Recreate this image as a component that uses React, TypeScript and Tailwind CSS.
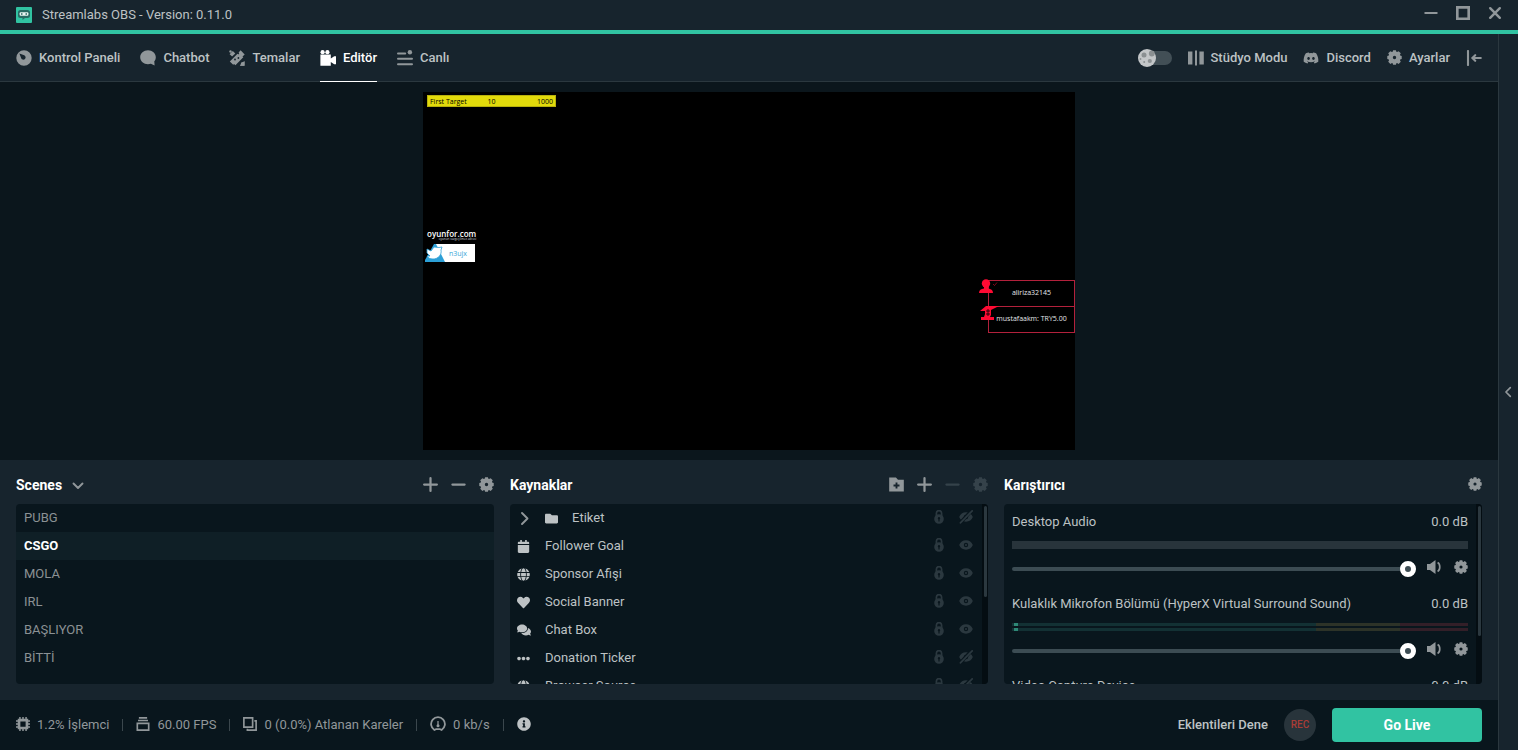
// src/App.tsx
// Streaming editor: title bar, nav, canvas preview, scenes / sources / mixer, status footer.

import { useState } from 'react'
import type { ReactNode } from 'react'
import { FaCalendar, FaComments, FaDiscord, FaEllipsisH, FaFolder, FaGlobe, FaHeart, FaInfoCircle } from 'react-icons/fa'

/* ---------- Icons ---------- */

type IconProps = { className?: string }

function Svg({ className = 'size-4', children }: IconProps & { children: ReactNode }) {
  return (
    <svg viewBox="0 0 16 16" fill="currentColor" className={`shrink-0 ${className}`} aria-hidden="true">
      {children}
    </svg>
  )
}

const GearIcon = ({ className }: IconProps) => (
  <Svg className={className}>
    <path
      fillRule="evenodd"
      d="M6.500.300h3l.5 1.600.7.3 1.700-1 2.300 2.300-.9 1.600.3.700 1.600.500v3.400l-1.600.500-.3.700.9 1.600-2.300 2.300-1.700-1-.7.300-.5 1.600h-3L6 14.100l-.7-.3-1.700 1-2.300-2.300.9-1.600-.3-.7L.300 9.700V6.300l1.600-.500.3-.7-.9-1.600L3.600 1.200l1.700 1L6 1.900zM8 6.200a1.800 1.800 0 1 0 0 3.600 1.800 1.800 0 0 0 0-3.600z"
    />
  </Svg>
)

const PlusIcon = ({ className }: IconProps) => (
  <Svg className={className}>
    <path d="M8 1.200v13.600M1.200 8h13.600" stroke="currentColor" strokeWidth="2.400" strokeLinecap="round" />
  </Svg>
)

const MinusIcon = ({ className }: IconProps) => (
  <Svg className={className}>
    <path d="M1.500 8h13" stroke="currentColor" strokeWidth="2.400" strokeLinecap="round" />
  </Svg>
)

const FolderPlusIcon = ({ className }: IconProps) => (
  <Svg className={className}>
    <path fillRule="evenodd" d="M.2.6h7.200l2.200 2.400h6.200v12.400H.2zM7 5.800v2.200H4.800v2H7v2.200h2V10h2.200V8H9V5.800z" />
  </Svg>
)

const DashboardIcon = () => (
  <Svg>
    <path fillRule="evenodd" d="M8 .3a7.700 7.700 0 1 0 0 15.400A7.700 7.700 0 0 0 8 .3zM3.400 3.600l4.800 1.600a2.300 2.300 0 1 1-3 3z" />
  </Svg>
)

const ChatbotIcon = () => (
  <Svg>
    <path d="M8 .3C3.700.3.200 3.300.2 7.200s3.500 7 7.800 7c1 0 2-.2 2.900-.5l3.700 1.700-.3-4.100c1-1.100 1.500-2.600 1.500-4.100C15.800 3.300 12.300.3 8 .3z" />
  </Svg>
)

const ThemesIcon = () => (
  <Svg>
    <path d="M11.600.300 15.700 4.400 13.500 6.500 14.300 7.300 6.400 15.200 5.100 13.900 4.200 14.800.800 11.400 8.500 3.700 9.300 4.500 10.200 3.600 9.600 2.600z" />
    <path d="M.6 4.300 3.800 1.100 6.300 3.600 3.100 6.600z" />
    <path d="M15.500 11v4.700h-4.700z" />
    <path d="M15.500 11.500v4.200h-4.300l1-3.200z" />
    <circle cx="1.500" cy="1.500" r="1.200" />
    <g fill="#17242d">
      <circle cx="6" cy="9.500" r=".9" />
      <circle cx="9.400" cy="8" r=".9" />
    </g>
  </Svg>
)

const CameraIcon = () => (
  <Svg>
    <circle cx="2.600" cy="2.200" r="2.100" />
    <circle cx="7.400" cy="2.200" r="2.100" />
    <path d="M.4 4.600h10.400v3.900l3.400-2.200H16v8h-1.800l-3.400-2.200v3.600H.4z" />
  </Svg>
)

const LiveIcon = () => (
  <Svg>
    <path d="M1 3.500h7.200M1 8.800h14M1 14.200h14" stroke="currentColor" strokeWidth="2" strokeLinecap="round" />
    <circle cx="12.900" cy="2.300" r="2.200" />
  </Svg>
)

const StudioIcon = () => (
  <Svg>
    <path d="M0 1.500h4.400v13H0zM7 .5h2v15H7zM11.400 1.500h4.400v13h-4.400z" />
  </Svg>
)

const CollapseIcon = () => (
  <Svg>
    <path d="M2 1v14M14.800 8H6.800M9.200 5.200 6.400 8l2.800 2.800" fill="none" stroke="currentColor" strokeWidth="2.100" strokeLinecap="round" />
  </Svg>
)

const LockIcon = () => (
  <svg viewBox="0 0 10 14" className="h-3.5 w-2.5" fill="currentColor" aria-hidden="true">
    <path d="M2.400 6V3.200a2.600 2.600 0 0 1 5.200 0V6" fill="none" stroke="currentColor" strokeWidth="1.700" />
    <path fillRule="evenodd" d="M5 4.200a4.800 4.800 0 1 0 0 9.600 4.800 4.800 0 0 0 0-9.600zM5 7a1.300 1.300 0 0 0-.6 2.400v2h1.200v-2A1.300 1.300 0 0 0 5 7z" />
  </svg>
)

const EyeIcon = ({ hidden }: { hidden?: boolean }) => (
  <svg viewBox="0 0 14 14" className="size-3.5" fill="currentColor" aria-hidden="true">
    <path
      fillRule="evenodd"
      d="M7 2.300C3.800 2.300 1.300 4.100.2 7c1.100 2.900 3.600 4.700 6.800 4.700s5.700-1.800 6.800-4.700C12.700 4.100 10.200 2.300 7 2.300zM7 4.800a2.200 2.200 0 1 1 0 4.400 2.200 2.200 0 0 1 0-4.400z"
    />
    <circle cx="7" cy="7" r="1" />
    {hidden && (
      <>
        <path d="M1.200 13 12 1.200" stroke="#09161d" strokeWidth="3.400" />
        <path d="M1.400 12.800 13.200.8" stroke="currentColor" strokeWidth="1.700" strokeLinecap="round" />
      </>
    )}
  </svg>
)

const SpeakerIcon = () => (
  <Svg>
    <path d="M1 4.900h3L9.500 1v14L4 11.100H1z" />
    <path d="M11.600 3.600c2.900 1.500 2.900 7.300 0 8.800" fill="none" stroke="currentColor" strokeWidth="1.700" />
  </Svg>
)

const CpuIcon = () => (
  <Svg className="size-3.5">
    <path fillRule="evenodd" d="M2 2h12v12H2zM5 5v6h6V5z" />
    <path d="M4.500 0v3M8 0v3M11.500 0v3M4.500 13v3M8 13v3M11.500 13v3M0 4.500h3M0 8h3M0 11.500h3M13 4.500h3M13 8h3M13 11.500h3" stroke="currentColor" strokeWidth="1.700" />
  </Svg>
)

const FpsIcon = () => (
  <Svg className="size-3.5">
    <path d="M3.300 1h9.400M2.300 4h11.400" stroke="currentColor" strokeWidth="1.800" />
    <path d="M1.500 7.200h13v7.800h-13z" fill="none" stroke="currentColor" strokeWidth="1.900" />
  </Svg>
)

const FramesIcon = () => (
  <Svg className="size-3.5">
    <path d="M1 1h10v10.500H1zM13 4.500h2V15H5v-1.500" fill="none" stroke="currentColor" strokeWidth="1.900" />
  </Svg>
)

const SpeedIcon = () => (
  <Svg>
    <path d="M4.400 14a6.900 6.900 0 1 1 7.200 0l-1.500-.8H5.900z" fill="none" stroke="currentColor" strokeWidth="1.800" strokeLinejoin="round" />
    <path d="M8 5v5" stroke="currentColor" strokeWidth="1.300" />
    <circle cx="8" cy="9.700" r="1.500" />
  </Svg>
)

const ChevronIcon = ({ d, className }: IconProps & { d: string }) => (
  <Svg className={className}>
    <path d={d} fill="none" stroke="currentColor" strokeWidth="1.900" strokeLinecap="round" strokeLinejoin="round" />
  </Svg>
)

const LogoIcon = () => (
  <Svg>
    <rect width="16" height="16" rx="1" fill="#31c3a2" />
    <path d="M4.500 3h7a2.500 2.500 0 0 1 2.500 2.500v3A2.500 2.500 0 0 1 11.500 11H9l-2.500 2V11h-2A2.500 2.500 0 0 1 2 8.500v-3A2.500 2.500 0 0 1 4.500 3z" fill="#276a63" />
    <rect x="3.600" y="5.200" width="8.800" height="3.600" rx="1" fill="#e8f3f1" />
    <path d="M5 6.200h1.500v1.600H5zM9.500 6.200H11v1.600H9.500z" fill="#276a63" />
  </Svg>
)

/* ---------- Data ---------- */

const NAV = [
  { label: 'Kontrol Paneli', icon: <DashboardIcon /> },
  { label: 'Chatbot', icon: <ChatbotIcon /> },
  { label: 'Temalar', icon: <ThemesIcon /> },
  { label: 'Editör', icon: <CameraIcon /> },
  { label: 'Canlı', icon: <LiveIcon /> },
]

const SCENES = ['PUBG', 'CSGO', 'MOLA', 'IRL', 'BAŞLIYOR', 'BİTTİ']

const SOURCES = [
  { label: 'Follower Goal', icon: <FaCalendar size={13} /> },
  { label: 'Sponsor Afişi', icon: <FaGlobe size={13} /> },
  { label: 'Social Banner', icon: <FaHeart size={13} /> },
  { label: 'Chat Box', icon: <FaComments size={14} /> },
  { label: 'Donation Ticker', icon: <FaEllipsisH size={13} />, hidden: true },
  { label: 'Browser Source', icon: <FaGlobe size={13} />, hidden: true },
]

const CHANNELS = [
  { label: 'Desktop Audio', active: false },
  { label: 'Kulaklık Mikrofon Bölümü (HyperX Virtual Surround Sound)', active: true },
  { label: 'Video Capture Device', active: false },
]

/* ---------- Parts ---------- */

function TitleBar() {
  return (
    <div className="flex h-[34px] shrink-0 items-center justify-between border-b-4 border-[#31c3a2] px-4">
      <div className="flex items-center gap-2.5 text-[13px]">
        <LogoIcon />
        <span>Streamlabs OBS - Version: 0.11.0</span>
      </div>
      <div className="flex items-center gap-[18px] pb-1 text-[#91979a]">
        <button aria-label="Minimize"><MinusIcon className="size-3.5" /></button>
        <button aria-label="Maximize">
          <Svg className="size-3.5"><path d="M1.500 1.500h13v13h-13z" fill="none" stroke="currentColor" strokeWidth="3" /></Svg>
        </button>
        <button aria-label="Close">
          <Svg className="size-3.5"><path d="M2.500 2.500l11 11M13.500 2.500l-11 11" stroke="currentColor" strokeWidth="2.800" strokeLinecap="round" /></Svg>
        </button>
      </div>
    </div>
  )
}

function TopNav() {
  return (
    <header className="flex h-12 shrink-0 items-stretch justify-between border-b border-[#2b383f] px-4 font-medium">
      <nav className="flex gap-5">
        {NAV.map(({ label, icon }) => (
          <a
            key={label}
            href="#"
            className={
              label === 'Editör'
                ? '-mb-px flex items-center gap-[7px] border-b border-white text-white'
                : '-mb-px flex items-center gap-[7px] border-b border-transparent'
            }
          >
            <span className={label === 'Editör' ? 'text-white' : 'text-[#91979a]'}>{icon}</span>
            {label}
          </a>
        ))}
      </nav>
      <div className="flex items-center gap-4">
        <button aria-label="Night mode" className="flex w-[34px] items-center">
          <svg viewBox="0 0 34 18" className="h-[18px] w-full" aria-hidden="true">
            <rect x="4" y="2" width="30" height="14" rx="7" fill="#424f56" />
            <circle cx="9" cy="9" r="9" fill="#c3c6c8" />
            <g fill="#8b9092">
              <circle cx="6" cy="6" r="2.500" />
              <circle cx="13.800" cy="4.500" r="2.900" />
              <circle cx="11.800" cy="12" r="2.100" />
              <circle cx="6.200" cy="13" r="1" />
            </g>
            <circle cx="2.500" cy="10" r="0.900" fill="#8b9092" />
          </svg>
        </button>
        <a href="#" className="flex items-center gap-[7px]">
          <span className="text-[#91979a]"><StudioIcon /></span>
          Stüdyo Modu
        </a>
        <a href="#" className="flex items-center gap-[7px]">
          <FaDiscord size={16} className="text-[#91979a]" />
          Discord
        </a>
        <a href="#" className="flex items-center gap-[7px]">
          <GearIcon className="size-[15px] text-[#91979a]" />
          Ayarlar
        </a>
        <button aria-label="Collapse" className="text-[#91979a]"><CollapseIcon /></button>
      </div>
    </header>
  )
}

// Output canvas; overlays sit freely on it
function Preview() {
  return (
    <section className="flex min-h-0 flex-1 justify-center bg-[#0b161c] py-2.5">
      <div className="relative aspect-[652/358] h-full overflow-hidden bg-black font-['Open_Sans',sans-serif] text-[7px] leading-none">
        <div className="absolute top-[3px] left-1 grid h-3 w-[129px] grid-cols-3 items-center border border-[#b8b10c] bg-[#e2da0b] px-0.5 font-medium text-black">
          <span className="whitespace-nowrap">First Target</span>
          <span className="text-center">10</span>
          <span className="text-right">1000</span>
        </div>

        <div className="absolute top-[138px] left-1 text-[8px] font-semibold text-white">
          oyunfor.com
          <div className="text-right text-[3px] font-normal text-gray-300">oyunun vazgeçilmez adresi</div>
        </div>

        <div className="absolute top-[152px] left-0.5 flex h-[18px] w-[50px] items-center justify-end bg-white pr-2 text-[#3aa7d8]">
          <svg viewBox="0 0 20 18" className="absolute left-0 h-[18px] w-5" aria-hidden="true">
            <path d="M0 0h11L20 18H0z" fill="#2c9fd6" />
            <path d="M0 0h9L0 16z" fill="#000" />
            <path d="M2 5l4 2 3-4 5 .5 3-.5-1 3c1 5-3 9-8 9-3 0-5-1-6-3h3L2 9z" fill="#fff" stroke="#2c9fd6" strokeWidth=".8" />
          </svg>
          n3ujx
        </div>

        <div className="absolute top-[188px] right-0 w-[87px] border border-[#b3213c] text-center text-gray-200">
          <div className="flex h-[26px] items-center justify-center border-b border-[#b3213c] pb-0.5">aliriza32145</div>
          <div className="flex h-[25px] items-center justify-center pb-0.5 whitespace-nowrap">mustafaakm: TRY5.00</div>
          <svg viewBox="0 0 20 44" className="absolute -top-0.5 -left-2.5 h-11 w-5 text-[#ff0a33]" fill="currentColor" aria-hidden="true">
            <circle cx="7" cy="4.500" r="4.200" />
            <path d="M5 8h4v1.500c3 .3 5 1.500 5 4.500H0c0-3 2-4.200 5-4.500z" />
            <path d="M14 5l1.500 1.500 2.500-3" fill="none" stroke="currentColor" strokeWidth=".5" />
            <path d="M1 32l6-5h13l-6 3-2 1v5l-1 2h4v3H2v-3h3l1-3v-3z" />
            <path d="M7 32h4M7 35h4M9 30v7" stroke="#000" strokeWidth=".8" />
          </svg>
        </div>
      </div>
    </section>
  )
}

function PanelHeader({ title, children }: { title: ReactNode; children: ReactNode }) {
  return (
    <div className="flex h-11 items-center justify-between pt-1.5">
      <h2 className="flex items-center gap-2 text-sm font-bold text-white">{title}</h2>
      <div className="flex items-center gap-[13px] pb-0.5 text-[#91979a]">{children}</div>
    </div>
  )
}

function Scenes() {
  const [active, setActive] = useState('CSGO')

  return (
    <section>
      <PanelHeader
        title={
          <>
            Scenes
            <button aria-label="Scene collections" className="text-[#91979a]">
              <ChevronIcon className="size-4" d="M3.500 6.500l4.500 4.500 4.500-4.500" />
            </button>
          </>
        }
      >
        <button aria-label="Add scene"><PlusIcon className="size-[15px]" /></button>
        <button aria-label="Remove scene"><MinusIcon className="size-[15px]" /></button>
        <button aria-label="Scene settings"><GearIcon className="size-[15px]" /></button>
      </PanelHeader>
      <ul className="h-[180px] overflow-hidden rounded bg-[#09161d]">
        {SCENES.map((scene) => (
          <li key={scene}>
            <button
              onClick={() => setActive(scene)}
              className={
                scene === active
                  ? 'h-7 w-full bg-[#0f1f26] px-2 text-left font-bold text-white'
                  : 'h-7 w-full px-2 text-left text-[#8b9194]'
              }
            >
              {scene}
            </button>
          </li>
        ))}
      </ul>
    </section>
  )
}

function RowActions({ hidden }: { hidden?: boolean }) {
  return (
    <span className="ml-auto flex items-center gap-[15px] pb-0.5 text-[#2b383f]">
      <button aria-label="Lock"><LockIcon /></button>
      <button aria-label="Visibility"><EyeIcon hidden={hidden} /></button>
    </span>
  )
}

function Sources() {
  return (
    <section>
      <PanelHeader title="Kaynaklar">
        <button aria-label="Add folder"><FolderPlusIcon className="size-[15px]" /></button>
        <button aria-label="Add source"><PlusIcon className="size-[15px]" /></button>
        <button aria-label="Remove source" disabled className="text-[#35424a]"><MinusIcon className="size-[15px]" /></button>
        <button aria-label="Source settings" disabled className="text-[#35424a]"><GearIcon className="size-[15px]" /></button>
      </PanelHeader>
      <div className="flex h-[180px] overflow-hidden rounded bg-[#09161d]">
        <ul className="min-w-0 flex-1">
          <li className="flex h-7 items-center pr-[9px] pl-[7px]">
            <button aria-label="Expand folder" className="w-7 text-[#91979a]">
              <ChevronIcon className="size-4" d="M5 3l5.500 5.500L5 14" />
            </button>
            <FaFolder size={13} className="mr-3.5" />
            Etiket
            <RowActions hidden />
          </li>
          {SOURCES.map(({ label, icon, hidden }) => (
            <li key={label} className="flex h-7 items-center pr-[9px] pl-[7px]">
              <span className="w-7">{icon}</span>
              {label}
              <RowActions hidden={hidden} />
            </li>
          ))}
        </ul>
        <div className="w-1.5 bg-[#040d12] pt-0.5">
          <div className="mx-auto h-[91px] w-[3px] rounded-full bg-[#2b383f]" />
        </div>
      </div>
    </section>
  )
}

function MeterBar() {
  return (
    <div className="relative flex h-[3px]">
      <div className="w-2/3 bg-[#133134]" />
      <div className="w-[18.4%] bg-[#2d3328]" />
      <div className="flex-1 bg-[#331f28]" />
      <div className="absolute inset-y-0 left-0.5 w-1 bg-[#2e8876]" />
    </div>
  )
}

function Mixer() {
  return (
    <section>
      <PanelHeader title="Karıştırıcı">
        <button aria-label="Mixer settings"><GearIcon className="size-3.5" /></button>
      </PanelHeader>
      <div className="flex h-[180px] overflow-hidden rounded bg-[#09161d]">
        <div className="min-w-0 flex-1 pr-2 pl-2">
          {CHANNELS.map(({ label, active }, i) => (
            <div key={label} className="h-[82px] pt-2">
              <div className="flex h-5 items-center justify-between">
                <label htmlFor={`volume-${i}`}>{label}</label>
                <span>0.0 dB</span>
              </div>
              <div className="mt-[9px] h-2">
                {active ? (
                  <div className="flex flex-col gap-0.5">
                    <MeterBar />
                    <MeterBar />
                  </div>
                ) : (
                  <div className="h-full bg-[#28343b]" />
                )}
              </div>
              <div className="mt-3 flex h-4 items-center text-[#91979a]">
                <input
                  id={`volume-${i}`}
                  type="range"
                  defaultValue={100}
                  className="h-1 min-w-0 flex-1 appearance-none rounded-full bg-[#3c4c53] [&::-webkit-slider-thumb]:size-4 [&::-webkit-slider-thumb]:appearance-none [&::-webkit-slider-thumb]:rounded-full [&::-webkit-slider-thumb]:border-[5px] [&::-webkit-slider-thumb]:border-white [&::-webkit-slider-thumb]:bg-[#3c4c53]"
                />
                <button aria-label="Mute" className="ml-2.5 pb-1"><SpeakerIcon /></button>
                <button aria-label="Channel settings" className="ml-3 pb-1"><GearIcon className="size-3.5" /></button>
              </div>
            </div>
          ))}
        </div>
        <div className="w-1.5 bg-[#040d12] pt-0.5">
          <div className="mx-auto h-[130px] w-[3px] rounded-full bg-[#2b383f]" />
        </div>
      </div>
    </section>
  )
}

const Divider = () => <span className="h-3 w-px bg-[#3b474d]" />

function Footer() {
  return (
    <footer className="flex h-[50px] shrink-0 items-center justify-between bg-[#09161d] px-4">
      <div className="flex items-center gap-[13px] text-[#91979a] [&_svg]:mb-0.5">
        <span className="flex items-center gap-[7px]"><CpuIcon />1.2% İşlemci</span>
        <Divider />
        <span className="flex items-center gap-[7px]"><FpsIcon />60.00 FPS</span>
        <Divider />
        <span className="flex items-center gap-[7px]"><FramesIcon />0 (0.0%) Atlanan Kareler</span>
        <Divider />
        <span className="flex items-center gap-[7px]"><SpeedIcon />0 kb/s</span>
        <Divider />
        <button aria-label="Info" className="text-[#bdc2c4]"><FaInfoCircle size={14} /></button>
      </div>
      <div className="flex items-center gap-4">
        <a href="#" className="font-medium">Eklentileri Dene</a>
        <button className="size-8 rounded-full bg-[#28343b] text-[10px] font-medium text-[#a83c36]">REC</button>
        <button className="h-[34px] w-[150px] rounded bg-[#31c3a2] text-sm font-bold text-white">Go Live</button>
      </div>
    </footer>
  )
}

export default function App() {
  return (
    <div className="flex h-screen flex-col bg-[#17242d] font-['Roboto',sans-serif] text-[13px] leading-5 text-[#bdc2c4] [&_button]:block">
      <TitleBar />
      <div className="flex min-h-0 flex-1">
        <main className="flex min-w-0 flex-1 flex-col">
          <TopNav />
          <Preview />
          <div className="grid shrink-0 grid-cols-3 gap-4 px-4 pb-4">
            <Scenes />
            <Sources />
            <Mixer />
          </div>
          <Footer />
        </main>
        <aside className="flex w-5 shrink-0 items-center justify-center border-l border-[#2b383f]">
          <button aria-label="Open live dock" className="text-[#91979a]">
            <ChevronIcon className="size-3.5" d="M9.500 3l-5 5 5 5" />
          </button>
        </aside>
      </div>
    </div>
  )
}
